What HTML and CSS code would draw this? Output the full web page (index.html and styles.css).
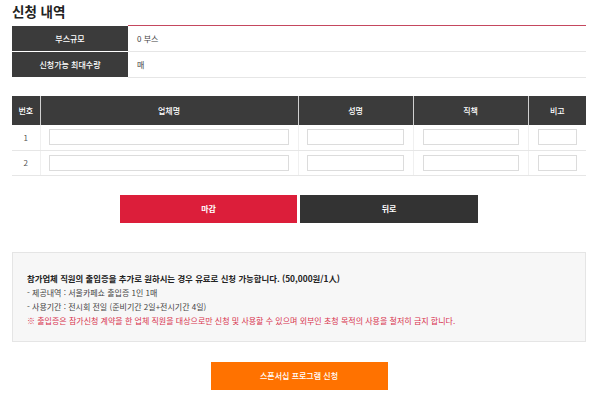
FILE: index.html
```html
<!DOCTYPE html>
<html lang="ko">
<head>
<meta charset="utf-8">
<link rel="stylesheet" href="styles.css">
</head>
<body>
<div class="page">
  <h2 class="title">신청 내역</h2>
  <table class="info-table">
    <tr><th>부스규모</th><td class="first">0 부스</td></tr>
    <tr><th>신청가능 최대수량</th><td>매</td></tr>
  </table>

  <table class="list-table">
    <colgroup>
      <col class="c-no"><col class="c-company"><col class="c-name"><col class="c-pos"><col class="c-note">
    </colgroup>
    <thead>
      <tr><th>번호</th><th>업체명</th><th>성명</th><th>직책</th><th>비고</th></tr>
    </thead>
    <tbody>
      <tr>
        <td class="no">1</td>
        <td><input class="inp w-company" type="text"></td>
        <td><input class="inp w-name" type="text"></td>
        <td><input class="inp w-pos" type="text"></td>
        <td><input class="inp w-note" type="text"></td>
      </tr>
      <tr>
        <td class="no">2</td>
        <td><input class="inp w-company" type="text"></td>
        <td><input class="inp w-name" type="text"></td>
        <td><input class="inp w-pos" type="text"></td>
        <td><input class="inp w-note" type="text"></td>
      </tr>
    </tbody>
  </table>

  <div class="btns">
    <button class="btn btn-red">마감</button>
    <button class="btn btn-dark">뒤로</button>
  </div>

  <div class="notice">
    <p class="notice-head">참가업체 직원의 출입증을 추가로 원하시는 경우 유료로 신청 가능합니다. (50,000원/1人)</p>
    <p class="line">- 제공내역 : 서울카페쇼 출입증 1인 1매</p>
    <p class="line">- 사용기간 : 전시회 전일 (준비기간 2일+전시기간 4일)</p>
    <p class="line warn">※ 출입증은 참가신청 계약을 한 업체 직원을 대상으로만 신청 및 사용할 수 있으며 외부인 초청 목적의 사용을 철저히 금지 합니다.</p>
  </div>

  <div class="bottom">
    <button class="btn btn-orange">스폰서십 프로그램 신청</button>
  </div>
</div>
</body>
</html>
```

FILE: styles.css
```css
* { box-sizing: border-box; }
html, body { margin: 0; padding: 0; background: #fff; }
body {
  font-family: "Noto Sans CJK KR", "Noto Sans", sans-serif;
  color: #333;
}
.page {
  width: 574px;
  margin-left: 12px;
}
.title {
  margin: 0;
  padding-top: 1px;
  height: 25px;
  font-size: 13.5px;
  font-weight: 700;
  color: #222;
  line-height: 20px;
}
.info-table {
  width: 100%;
  border-collapse: collapse;
  font-size: 8px;
}
.info-table th {
  width: 116px;
  height: 26px;
  background: #3b3b3b;
  color: #fff;
  font-weight: 500;
  text-align: center;
  border-bottom: 1px solid #fff;
  padding: 0;
}
.info-table td {
  height: 26px;
  padding: 0 0 0 9px;
  border-bottom: 1px solid #e6e6e6;
  color: #444;
}
.info-table td.first { border-top: 1px solid #c5485e; }
.list-table {
  margin-top: 18px;
  width: 100%;
  border-collapse: collapse;
  table-layout: fixed;
  font-size: 8px;
}
.c-no { width: 28px; }
.c-company { width: 258px; }
.c-name { width: 115px; }
.c-pos { width: 115px; }
.c-note { width: 58px; }
.list-table th {
  height: 29px;
  background: #3b3b3b;
  color: #fff;
  font-weight: 500;
  padding: 0;
  border-left: 1px solid #d0d0d0;
}
.list-table th:first-child { border-left: none; }
.list-table td {
  height: 25px;
  padding: 0;
  text-align: center;
  border-bottom: 1px solid #e6e6e6;
  border-left: 1px solid #f0f0f0;
}
.list-table td:first-child { border-left: none; }
.list-table td.no { color: #555; }
.inp {
  display: block;
  margin: 0 auto;
  height: 16px;
  border: 1px solid #dcdcdc;
  background: #fff;
  padding: 0;
}
.w-company { width: 240px; }
.w-name { width: 97px; }
.w-pos { width: 96px; }
.w-note { width: 39px; }
.btns {
  margin-top: 19px;
  display: flex;
  justify-content: center;
  gap: 3px;
}
.btn {
  border: none;
  font-family: inherit;
  font-size: 8px;
  font-weight: 700;
  color: #fff;
  height: 28px;
  padding: 0;
}
.btn-red { width: 177px; background: #dc1e3a; }
.btn-dark { width: 178px; background: #333; }
.notice {
  margin-top: 29px;
  height: 90px;
  background: #f7f7f7;
  border: 1px solid #e5e5e5;
  padding: 18px 0 0 14px;
}
.notice p { margin: 0; }
.notice-head {
  font-size: 8.4px;
  font-weight: 700;
  color: #222;
  line-height: 14px;
  margin-bottom: 1px !important;
}
.line {
  font-size: 8px;
  line-height: 14px;
  color: #444;
}
.warn { color: #d8334e; }
.bottom {
  margin-top: 20px;
  display: flex;
  justify-content: center;
}
.btn-orange {
  width: 177px;
  background: #ff7200;
  font-weight: 500;
}
```
